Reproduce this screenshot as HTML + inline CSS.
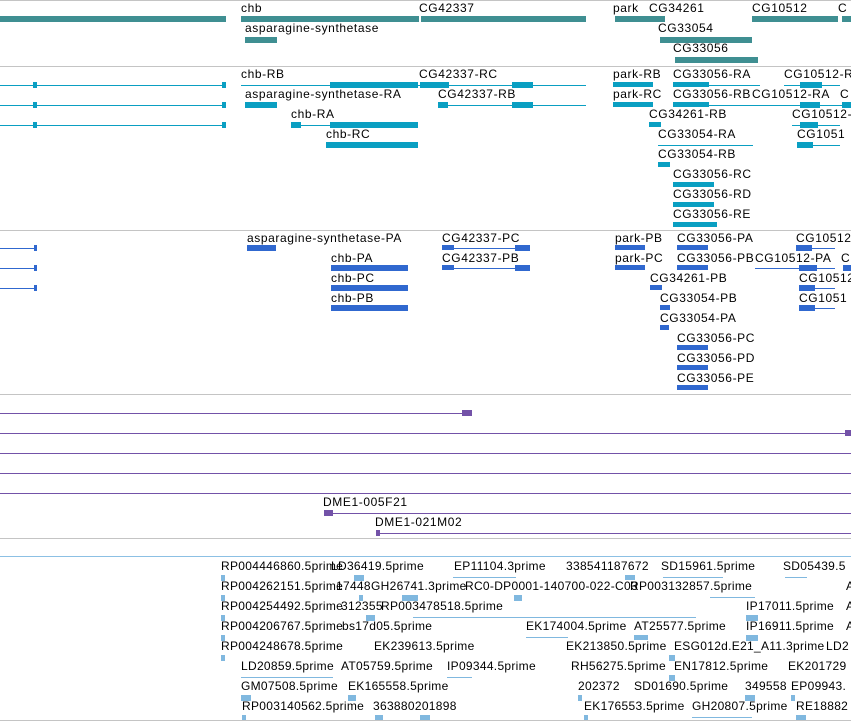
<!DOCTYPE html>
<html><head><meta charset="utf-8"><style>
*{margin:0;padding:0}
body{width:851px;height:722px;background:#fff;position:relative;overflow:hidden;font-family:"Liberation Sans","DejaVu Sans",sans-serif}
.t{position:absolute;font-size:12px;line-height:14px;color:#000;white-space:nowrap;letter-spacing:0.6px}
.s5 .t{letter-spacing:0.3px}
.b,.l,.h{position:absolute;display:block}
.h{height:1px;left:0;width:851px;background:#c4c4c4}
.g{background:#3f8f92;height:7px}
.c{background:#0a9fc2}
.u{background:#3068cf}
.p{background:#7352a8}
.e{background:#80b8df}
.l{height:1px}
.b{height:6px}
</style></head><body>
<i class="h" style="top:0"></i>
<i class="h" style="top:66px"></i>
<i class="h" style="top:230px"></i>
<i class="h" style="top:394px"></i>
<i class="h" style="top:538px"></i>
<i class="h" style="top:556px;background:#8cc0e4"></i>
<i class="h" style="top:720px"></i>

<i class="b g" style="left:0;top:16px;width:226px"></i>
<i class="b g" style="left:241px;top:16px;width:178px"></i>
<i class="b g" style="left:421px;top:16px;width:165px"></i>
<i class="b g" style="left:615px;top:16px;width:50px"></i>
<i class="b g" style="left:752px;top:16px;width:86px"></i>
<i class="b g" style="left:842px;top:16px;width:9px"></i>
<i class="b g" style="left:245px;top:37px;width:32px"></i>
<i class="b g" style="left:660px;top:37px;width:92px"></i>
<i class="b g" style="left:675px;top:57px;width:83px"></i>
<div class="t" style="left:241px;top:1px">chb</div>
<div class="t" style="left:419px;top:1px">CG42337</div>
<div class="t" style="left:613px;top:1px">park</div>
<div class="t" style="left:649px;top:1px">CG34261</div>
<div class="t" style="left:752px;top:1px">CG10512</div>
<div class="t" style="left:838px;top:1px">C</div>
<div class="t" style="left:245px;top:21px">asparagine-synthetase</div>
<div class="t" style="left:658px;top:21px">CG33054</div>
<div class="t" style="left:673px;top:41px">CG33056</div>

<i class="l c" style="left:0;top:85px;width:226px"></i>
<i class="l c" style="left:0;top:105px;width:226px"></i>
<i class="l c" style="left:0;top:125px;width:226px"></i>
<i class="b c" style="left:33px;top:82px;width:4px"></i><i class="b c" style="left:222px;top:82px;width:4px"></i>
<i class="b c" style="left:33px;top:102px;width:4px"></i><i class="b c" style="left:222px;top:102px;width:4px"></i>
<i class="b c" style="left:33px;top:122px;width:4px"></i><i class="b c" style="left:222px;top:122px;width:4px"></i>
<div class="t" style="left:241px;top:67px">chb-RB</div>
<i class="l c" style="left:241px;top:85px;width:345px"></i>
<i class="b c" style="left:330px;top:82px;width:88px"></i>
<i class="b c" style="left:420px;top:82px;width:29px"></i>
<i class="b c" style="left:512px;top:82px;width:21px"></i>
<div class="t" style="left:419px;top:67px">CG42337-RC</div>
<div class="t" style="left:245px;top:87px">asparagine-synthetase-RA</div>
<i class="b c" style="left:245px;top:102px;width:32px"></i>
<div class="t" style="left:438px;top:87px">CG42337-RB</div>
<i class="l c" style="left:438px;top:105px;width:148px"></i>
<i class="b c" style="left:438px;top:102px;width:10px"></i>
<i class="b c" style="left:512px;top:102px;width:21px"></i>
<div class="t" style="left:291px;top:107px">chb-RA</div>
<i class="l c" style="left:291px;top:125px;width:40px"></i>
<i class="b c" style="left:291px;top:122px;width:10px"></i>
<i class="b c" style="left:330px;top:122px;width:88px"></i>
<div class="t" style="left:326px;top:127px">chb-RC</div>
<i class="b c" style="left:326px;top:142px;width:92px"></i>
<div class="t" style="left:613px;top:67px">park-RB</div>
<i class="b c" style="left:613px;top:82px;width:40px;height:5px"></i>
<div class="t" style="left:613px;top:87px">park-RC</div>
<i class="b c" style="left:613px;top:102px;width:40px;height:5px"></i>
<div class="t" style="left:673px;top:67px">CG33056-RA</div>
<i class="l c" style="left:673px;top:85px;width:87px"></i>
<i class="b c" style="left:673px;top:82px;width:36px;height:5px"></i>
<div class="t" style="left:784px;top:67px">CG10512-R</div>
<i class="l c" style="left:784px;top:85px;width:56px"></i>
<i class="b c" style="left:800px;top:82px;width:22px"></i>
<div class="t" style="left:673px;top:87px">CG33056-RB</div>
<div class="t" style="left:752px;top:87px">CG10512-RA</div>
<div class="t" style="left:840px;top:87px">C</div>
<i class="l c" style="left:673px;top:105px;width:178px"></i>
<i class="b c" style="left:673px;top:102px;width:36px;height:5px"></i>
<i class="b c" style="left:800px;top:102px;width:20px"></i>
<i class="b c" style="left:842px;top:102px;width:9px"></i>
<div class="t" style="left:649px;top:107px">CG34261-RB</div>
<i class="b c" style="left:649px;top:122px;width:12px;height:5px"></i>
<div class="t" style="left:792px;top:107px">CG10512-</div>
<i class="l c" style="left:792px;top:125px;width:48px"></i>
<i class="b c" style="left:800px;top:122px;width:18px"></i>
<div class="t" style="left:658px;top:127px">CG33054-RA</div>
<i class="l c" style="left:658px;top:145px;width:95px"></i>
<div class="t" style="left:797px;top:127px">CG1051</div>
<i class="b c" style="left:797px;top:142px;width:16px"></i><i class="l c" style="left:797px;top:145px;width:43px"></i>
<div class="t" style="left:658px;top:147px">CG33054-RB</div>
<i class="b c" style="left:658px;top:162px;width:12px;height:5px"></i>
<div class="t" style="left:673px;top:167px">CG33056-RC</div>
<i class="b c" style="left:673px;top:182px;width:41px;height:5px"></i>
<div class="t" style="left:673px;top:187px">CG33056-RD</div>
<i class="b c" style="left:673px;top:202px;width:41px;height:5px"></i>
<div class="t" style="left:673px;top:207px">CG33056-RE</div>
<i class="b c" style="left:673px;top:222px;width:44px;height:5px"></i>

<i class="l u" style="left:0;top:248px;width:37px"></i><i class="b u" style="left:34px;top:245px;width:3px"></i>
<i class="l u" style="left:0;top:268px;width:37px"></i><i class="b u" style="left:34px;top:265px;width:3px"></i>
<i class="l u" style="left:0;top:288px;width:37px"></i><i class="b u" style="left:34px;top:285px;width:3px"></i>
<div class="t" style="left:247px;top:231px">asparagine-synthetase-PA</div>
<i class="b u" style="left:247px;top:245px;width:29px"></i>
<div class="t" style="left:331px;top:251px">chb-PA</div>
<i class="b u" style="left:331px;top:265px;width:77px"></i>
<div class="t" style="left:331px;top:271px">chb-PC</div>
<i class="b u" style="left:331px;top:285px;width:77px"></i>
<div class="t" style="left:331px;top:291px">chb-PB</div>
<i class="b u" style="left:331px;top:305px;width:77px"></i>
<div class="t" style="left:442px;top:231px">CG42337-PC</div>
<i class="l u" style="left:442px;top:248px;width:88px"></i><i class="b u" style="left:442px;top:245px;width:12px;height:5px"></i><i class="b u" style="left:515px;top:245px;width:15px"></i>
<div class="t" style="left:442px;top:251px">CG42337-PB</div>
<i class="l u" style="left:442px;top:268px;width:88px"></i><i class="b u" style="left:442px;top:265px;width:12px;height:5px"></i><i class="b u" style="left:515px;top:265px;width:15px"></i>
<div class="t" style="left:615px;top:231px">park-PB</div>
<i class="b u" style="left:615px;top:245px;width:30px;height:5px"></i>
<div class="t" style="left:615px;top:251px">park-PC</div>
<i class="b u" style="left:615px;top:265px;width:30px;height:5px"></i>
<div class="t" style="left:677px;top:231px">CG33056-PA</div>
<i class="b u" style="left:677px;top:245px;width:31px;height:5px"></i>
<div class="t" style="left:796px;top:231px">CG10512</div>
<i class="b u" style="left:796px;top:245px;width:16px"></i><i class="l u" style="left:796px;top:248px;width:39px"></i>
<div class="t" style="left:677px;top:251px">CG33056-PB</div>
<i class="b u" style="left:677px;top:265px;width:31px;height:5px"></i>
<div class="t" style="left:755px;top:251px">CG10512-PA</div>
<div class="t" style="left:841px;top:251px">C</div>
<i class="l u" style="left:755px;top:268px;width:80px"></i><i class="b u" style="left:799px;top:265px;width:18px"></i><i class="b u" style="left:843px;top:265px;width:8px"></i>
<div class="t" style="left:650px;top:271px">CG34261-PB</div>
<i class="b u" style="left:650px;top:285px;width:12px;height:5px"></i>
<div class="t" style="left:799px;top:271px">CG10512</div>
<i class="b u" style="left:799px;top:285px;width:16px"></i><i class="l u" style="left:799px;top:288px;width:36px"></i>
<div class="t" style="left:660px;top:291px">CG33054-PB</div>
<i class="b u" style="left:660px;top:305px;width:10px;height:5px"></i>
<div class="t" style="left:799px;top:291px">CG1051</div>
<i class="b u" style="left:799px;top:305px;width:16px"></i><i class="l u" style="left:799px;top:308px;width:36px"></i>
<div class="t" style="left:660px;top:311px">CG33054-PA</div>
<i class="b u" style="left:660px;top:325px;width:9px;height:5px"></i>
<div class="t" style="left:677px;top:331px">CG33056-PC</div>
<i class="b u" style="left:677px;top:345px;width:31px;height:5px"></i>
<div class="t" style="left:677px;top:351px">CG33056-PD</div>
<i class="b u" style="left:677px;top:365px;width:31px;height:5px"></i>
<div class="t" style="left:677px;top:371px">CG33056-PE</div>
<i class="b u" style="left:677px;top:385px;width:31px;height:5px"></i>

<i class="l p" style="left:0;top:413px;width:466px"></i><i class="b p" style="left:462px;top:410px;width:10px"></i>
<i class="l p" style="left:0;top:433px;width:851px"></i><i class="b p" style="left:845px;top:430px;width:6px"></i>
<i class="l p" style="left:0;top:453px;width:851px"></i>
<i class="l p" style="left:0;top:473px;width:851px"></i>
<i class="l p" style="left:0;top:493px;width:851px"></i>
<div class="t" style="left:323px;top:495px">DME1-005F21</div>
<i class="l p" style="left:325px;top:513px;width:526px"></i><i class="b p" style="left:324px;top:510px;width:9px"></i>
<div class="t" style="left:375px;top:515px">DME1-021M02</div>
<i class="l p" style="left:376px;top:533px;width:475px"></i><i class="b p" style="left:376px;top:530px;width:4px"></i>

<div class="s5">
<div class="t" style="left:221px;top:559px">RP004446860.5prime</div>
<div class="t" style="left:331px;top:559px">LD36419.5prime</div>
<div class="t" style="left:454px;top:559px">EP11104.3prime</div>
<div class="t" style="left:566px;top:559px">338541187672</div>
<div class="t" style="left:661px;top:559px">SD15961.5prime</div>
<div class="t" style="left:783px;top:559px">SD05439.5</div>
<i class="b e" style="left:221px;top:575px;width:4px"></i><i class="b e" style="left:354px;top:575px;width:10px"></i>
<i class="l e" style="left:453px;top:577px;width:63px"></i><i class="b e" style="left:625px;top:575px;width:10px;height:5px"></i>
<i class="l e" style="left:663px;top:577px;width:60px"></i><i class="l e" style="left:785px;top:577px;width:22px"></i>

<div class="t" style="left:221px;top:579px">RP004262151.5prime</div>
<div class="t" style="left:336px;top:579px">17448</div>
<div class="t" style="left:371px;top:579px">GH26741.3prime</div>
<div class="t" style="left:465px;top:579px">RC0-DP0001-140700-022-C03</div>
<div class="t" style="left:630px;top:579px">RP003132857.5prime</div>
<div class="t" style="left:846px;top:579px">A</div>
<i class="b e" style="left:221px;top:595px;width:4px"></i><i class="b e" style="left:359px;top:595px;width:4px"></i><i class="b e" style="left:402px;top:595px;width:16px"></i><i class="b e" style="left:514px;top:595px;width:8px"></i><i class="l e" style="left:710px;top:597px;width:45px"></i>

<div class="t" style="left:221px;top:599px">RP004254492.5prime</div>
<div class="t" style="left:341px;top:599px">312355</div>
<div class="t" style="left:381px;top:599px">RP003478518.5prime</div>
<div class="t" style="left:746px;top:599px">IP17011.5prime</div>
<div class="t" style="left:846px;top:599px">A</div>
<i class="b e" style="left:221px;top:615px;width:4px"></i><i class="b e" style="left:366px;top:615px;width:9px"></i><i class="l e" style="left:413px;top:617px;width:283px"></i><i class="b e" style="left:746px;top:615px;width:12px"></i>

<div class="t" style="left:221px;top:619px">RP004206767.5prime</div>
<div class="t" style="left:342px;top:619px">bs17d05.5prime</div>
<div class="t" style="left:526px;top:619px">EK174004.5prime</div>
<div class="t" style="left:634px;top:619px">AT25577.5prime</div>
<div class="t" style="left:746px;top:619px">IP16911.5prime</div>
<div class="t" style="left:846px;top:619px">A</div>
<i class="b e" style="left:221px;top:635px;width:4px"></i><i class="l e" style="left:526px;top:637px;width:42px"></i><i class="b e" style="left:634px;top:635px;width:14px;height:5px"></i><i class="b e" style="left:746px;top:635px;width:12px"></i>

<div class="t" style="left:221px;top:639px">RP004248678.5prime</div>
<div class="t" style="left:374px;top:639px">EK239613.5prime</div>
<div class="t" style="left:566px;top:639px">EK213850.5prime</div>
<div class="t" style="left:674px;top:639px">ESG012d.E21_A11.3prime</div>
<div class="t" style="left:826px;top:639px">LD2</div>
<i class="b e" style="left:221px;top:655px;width:4px"></i><i class="b e" style="left:669px;top:655px;width:6px"></i>

<div class="t" style="left:241px;top:659px">LD20859.5prime</div>
<div class="t" style="left:341px;top:659px">AT05759.5prime</div>
<div class="t" style="left:447px;top:659px">IP09344.5prime</div>
<div class="t" style="left:571px;top:659px">RH56275.5prime</div>
<div class="t" style="left:674px;top:659px">EN17812.5prime</div>
<div class="t" style="left:788px;top:659px">EK201729</div>
<i class="l e" style="left:241px;top:677px;width:92px"></i><i class="l e" style="left:447px;top:677px;width:25px"></i><i class="b e" style="left:669px;top:675px;width:6px"></i>

<div class="t" style="left:241px;top:679px">GM07508.5prime</div>
<div class="t" style="left:348px;top:679px">EK165558.5prime</div>
<div class="t" style="left:578px;top:679px">202372</div>
<div class="t" style="left:634px;top:679px">SD01690.5prime</div>
<div class="t" style="left:745px;top:679px">349558</div>
<div class="t" style="left:791px;top:679px">EP09943.</div>
<i class="b e" style="left:241px;top:695px;width:10px"></i><i class="b e" style="left:348px;top:695px;width:8px"></i><i class="b e" style="left:578px;top:695px;width:4px"></i><i class="b e" style="left:745px;top:695px;width:10px"></i><i class="b e" style="left:791px;top:695px;width:4px"></i>

<div class="t" style="left:242px;top:699px">RP003140562.5prime</div>
<div class="t" style="left:373px;top:699px">363880201898</div>
<div class="t" style="left:584px;top:699px">EK176553.5prime</div>
<div class="t" style="left:692px;top:699px">GH20807.5prime</div>
<div class="t" style="left:796px;top:699px">RE18882</div>
<i class="b e" style="left:242px;top:715px;width:4px;height:5px"></i><i class="b e" style="left:375px;top:715px;width:8px;height:5px"></i><i class="b e" style="left:420px;top:715px;width:10px;height:5px"></i><i class="b e" style="left:584px;top:715px;width:4px;height:5px"></i><i class="l e" style="left:692px;top:717px;width:60px"></i><i class="b e" style="left:796px;top:715px;width:10px;height:5px"></i>
</div>
</body></html>
